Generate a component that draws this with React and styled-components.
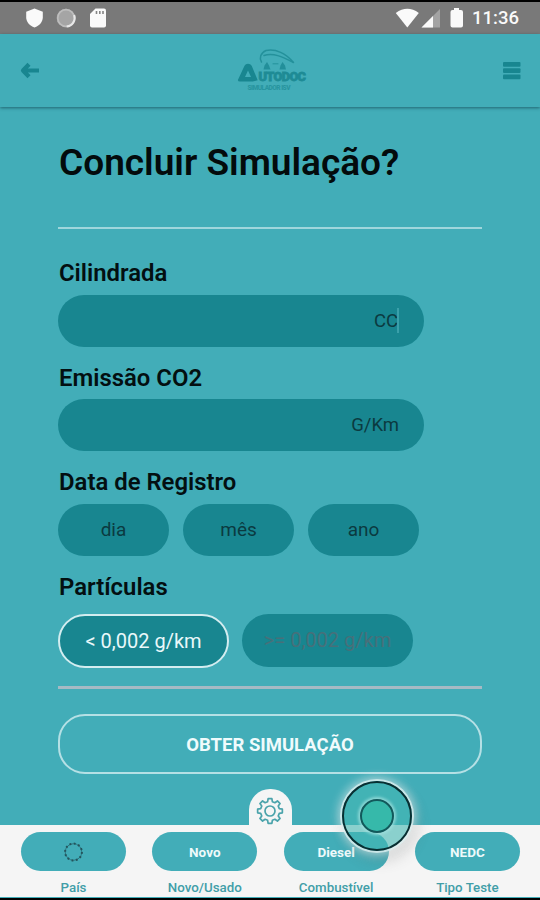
import React from 'react'
import styled, { createGlobalStyle } from 'styled-components'

const teal = '#42adb8'
const tealDark = '#188690'

const tabs = [
  { label: 'País', loading: true },
  { label: 'Novo/Usado', value: 'Novo' },
  { label: 'Combustível', value: 'Diesel' },
  { label: 'Tipo Teste', value: 'NEDC' },
]

const StatusBar = () => (
  <Status>
    <svg width="110" height="32" viewBox="0 2 110 32">
      <path d="M34.5 8.5l8.3 3.2v5.6c0 4.700-3.300 8.300-8.300 10.200-5-1.900-8.300-5.500-8.300-10.200v-5.600z" fill="#fafafa" />
      <circle cx="66" cy="18" r="9.300" fill="#a5a5a5" />
      <circle cx="66" cy="18" r="8.300" fill="none" stroke="#bdbdbd" strokeWidth="1.700" />
      <path d="M74.200 15a8.600 8.600 0 0 1-7.500 11.500" fill="none" stroke="#e8e8e8" strokeWidth="2" />
      <path d="M95.500 8.500h8.500q2 0 2 2v15q0 2-2 2H92q-2 0-2-2V14z" fill="#fafafa" />
      <path d="M96.500 11v3M99.800 11v3M103 11v3" stroke="#858585" strokeWidth="1.600" />
    </svg>
    <StatusRight>
      <svg width="72" height="32" viewBox="394 2 72 32">
        <path d="M395.800 13q11.500-8.400 23 0l-11.500 14.500z" fill="#fafafa" />
        <path d="M421.500 27.500L440 9v18.500z" fill="#a3a3a3" />
        <path d="M421.500 27.500L433 16v11.500z" fill="#fafafa" />
        <path d="M454 8h5v2h2q2 0 2 2v13.500q0 2-2 2h-8.500q-2 0-2-2V12q0-2 2-2h1.500z" fill="#fafafa" />
      </svg>
      <Clock>11:36</Clock>
    </StatusRight>
  </Status>
)

const Logo = () => (
  <svg width="74" height="48" viewBox="236 47 74 48" fill={tealDark}>
    <g fill="none" stroke={tealDark} strokeLinecap="round" opacity="0.7">
      <path d="M262.500 62c-2.500-4-1-9 4.500-11.500 10-2 20 3 27 11.500" strokeWidth="1.500" />
      <path d="M265 55.500c9-3 18 1 29.500 7" strokeWidth="1.500" />
      <path d="M274 63.800h5" strokeWidth="1" />
    </g>
    <g opacity="0.75">
      <path d="M264.500 69.500l1-4 2.500-3.500 2 3.500 1.500 4zM280.500 69.500l1-4 2-3.500 2.500 3.500 1 4z" />
    </g>
    <path fillRule="evenodd" d="M239 79.800l6.500-14q1-2 3.500-2t3.700 2l6 14.500-5 1.200h-12.700q-2.500 0-2-1.700zM246 77h6l-3-6.500z" />
    <LogoText x="259.500" y="81" textLength="47.500" fontSize="12.800">UTODOC</LogoText>
    <LogoText x="248.500" y="89.800" textLength="43" fontSize="6.600" $soft>SIMULADOR ISV</LogoText>
  </svg>
)

const Gear = () => {
  // eight teeth round the centre, alternating outer and inner radius
  const points = []
  for (let i = 0; i < 8; i++) {
    const a = (i * 45 * Math.PI) / 180
    const steps = [[-0.25, 9.600], [-0.15, 12.500], [0.15, 12.500], [0.25, 9.600]]
    steps.forEach(([d, r]) => {
      points.push(`${(Math.sin(a + d) * r).toFixed(2)},${(-Math.cos(a + d) * r).toFixed(2)}`)
    })
  }
  return (
    <svg width="30" height="30" viewBox="-15 -15 30 30" fill="none" stroke="#4aa3ab" strokeWidth="1.700" strokeLinejoin="round">
      <polygon points={points.join(' ')} />
      <circle r="5" />
    </svg>
  )
}

const Spinner = () => (
  <svg width="22" height="22" viewBox="-10.500 -11 22 22">
    <circle r="8.300" fill="none" stroke="#2c7780" strokeWidth="1" />
    <circle r="8.400" fill="none" stroke="#24545c" strokeWidth="2" strokeDasharray="1.900 2.500" />
  </svg>
)

const App = () => {
  return (
    <Wrapper>
      <GlobalStyle />
      <StatusBar />
      <Header>
        <svg width="20" height="18" viewBox="0 0 20 18" fill="none" stroke={tealDark} strokeWidth="4.200" strokeLinejoin="round">
          <path d="M9 2.200L3 8.500l6 6.300M3.500 8.500H19" />
        </svg>
        <Logo />
        <svg width="18" height="18" viewBox="0 0 18 18" fill={tealDark}>
          <rect y="0" width="17.500" height="4.800" rx="1" />
          <rect y="6.300" width="17.500" height="4.800" rx="1" />
          <rect y="12.500" width="17.500" height="4.800" rx="1" />
        </svg>
      </Header>
      <Content>
        <Title>Concluir Simulação?</Title>
        <Line />
        <Form>
          <Label>Cilindrada</Label>
          <Field>
            CC
            <Caret />
          </Field>
          <Label>Emissão CO2</Label>
          <Field>G/Km</Field>
          <Label>Data de Registro</Label>
          <Row>
            <DateField>dia</DateField>
            <DateField>mês</DateField>
            <DateField>ano</DateField>
          </Row>
          <Label>Partículas</Label>
          <OptionRow>
            <Option $active>&lt; 0,002 g/km</Option>
            <Option>&gt;= 0,002 g/km</Option>
          </OptionRow>
        </Form>
        <Line $thick />
        <Submit>OBTER SIMULAÇÃO</Submit>
      </Content>
      <BottomBar>
        <GearTab>
          <Gear />
        </GearTab>
        {tabs.map(({ label, value, loading }) => (
          <Tab key={label}>
            <TabPill>{loading ? <Spinner /> : value}</TabPill>
            <TabLabel>{label}</TabLabel>
          </Tab>
        ))}
        <TouchPoint />
      </BottomBar>
    </Wrapper>
  )
}

const GlobalStyle = createGlobalStyle`
  * {
    box-sizing: border-box;
  }
  body {
    margin: 0;
    background: #000;
    font-family: Roboto, 'Liberation Sans', sans-serif;
  }
  svg {
    display: block;
    flex-shrink: 0;
  }
`

const Wrapper = styled.main`
  width: 540px;
  height: 900px;
  display: flex;
  flex-direction: column;
  overflow: hidden;
  background: ${teal};
  border-top: 2px solid #000;
  border-bottom: 2px solid #000;
`

const Status = styled.div`
  height: 32px;
  flex-shrink: 0;
  display: flex;
  justify-content: space-between;
  background: #797979;
`

const StatusRight = styled.div`
  display: flex;
  align-items: center;
  padding-right: 20px;
`

const Clock = styled.span`
  width: 48px;
  margin-left: 6px;
  color: #fafafa;
  font-size: 18.500px;
  font-weight: 500;
  white-space: nowrap;
`

const Header = styled.header`
  height: 73px;
  flex-shrink: 0;
  display: flex;
  align-items: center;
  justify-content: space-between;
  padding: 0 19px 0 20px;
  box-shadow: 0 1px 3px rgba(20, 70, 80, 0.7);
`

const LogoText = styled.text`
  font-family: Roboto, sans-serif;
  font-weight: 900;
  stroke: ${tealDark};
  stroke-width: ${(props) => (props.$soft ? 0 : '0.8px')};
  opacity: ${(props) => (props.$soft ? 0.6 : 0.85)};
`

const Content = styled.section`
  flex: 1;
  padding: 34px 58px 0;
`

const Title = styled.h1`
  height: 44px;
  margin: 0 0 42px 1px;
  color: #030b0c;
  font-size: 37px;
  line-height: 44px;
  font-weight: 600;
  white-space: nowrap;
`

const Line = styled.div`
  height: ${(props) => (props.$thick ? '3px' : '2px')};
  background: ${(props) => (props.$thick ? '#a5bac4' : '#9fd6dc')};
`

const Form = styled.div`
  padding-top: 30px;
  height: 457px;
`

const Label = styled.h2`
  height: 28px;
  margin: 0 0 7.500px 1px;
  color: #030f11;
  font-size: 23.900px;
  line-height: 29px;
  font-weight: 600;
`

const Field = styled.div`
  width: 366px;
  height: 52px;
  margin-bottom: 17.200px;
  padding-right: 25px;
  display: flex;
  align-items: center;
  justify-content: flex-end;
  border-radius: 26px;
  background: ${tealDark};
  color: #0b3a40;
  font-size: 18.500px;
`

const Caret = styled.span`
  width: 2px;
  height: 25px;
  margin-left: -1px;
  background: #3aa0aa;
`

const Row = styled.div`
  display: flex;
  gap: 14px;
  margin-bottom: 17px;
`

const OptionRow = styled(Row)`
  margin-top: 13px;
  gap: 13px;
`

const DateField = styled.div`
  width: 111px;
  height: 52px;
  border-radius: 26px;
  display: flex;
  align-items: center;
  justify-content: center;
  background: ${tealDark};
  color: #0b3a40;
  font-size: 19px;
`

const Option = styled.div`
  width: 171px;
  height: ${(props) => (props.$active ? '54px' : '53px')};
  border-radius: 27px;
  display: flex;
  align-items: center;
  justify-content: center;
  border: ${(props) => (props.$active ? '2px solid #d3edf0' : 'none')};
  background: ${tealDark};
  color: ${(props) => (props.$active ? '#e9f8fa' : '#46707a')};
  font-size: 20px;
`

const Submit = styled.button`
  width: 100%;
  height: 60px;
  margin: 25px 0 0;
  padding: 2px 0 0;
  border: 2px solid #b5e0e5;
  border-radius: 27px;
  background: transparent;
  color: #f0fbfc;
  font-family: inherit;
  font-size: 18.500px;
  font-weight: 700;
`

const BottomBar = styled.footer`
  position: relative;
  height: 73px;
  flex-shrink: 0;
  display: flex;
  gap: 26.300px;
  padding: 7px 20px 0 21px;
  background: #f5f5f5;
  border-bottom: 1px solid ${teal};
`

const Tab = styled.div`
  width: 105px;
  display: flex;
  flex-direction: column;
  align-items: center;
`

const TabPill = styled.div`
  width: 105px;
  height: 39px;
  border-radius: 20px;
  display: flex;
  align-items: center;
  justify-content: center;
  background: ${teal};
  color: #eefafb;
  font-size: 13.500px;
  font-weight: 700;
`

const TabLabel = styled.span`
  margin-top: 9px;
  color: #419ea8;
  font-size: 13.300px;
  line-height: 16px;
  font-weight: 500;
  white-space: nowrap;
`

const GearTab = styled.div`
  position: absolute;
  left: 249px;
  top: -36px;
  width: 43px;
  height: 38px;
  padding: 7px 1px 0 0;
  display: flex;
  justify-content: center;
  background: #f5f5f5;
  border-radius: 21px 21px 0 0;
`

const TouchPoint = styled.div`
  position: absolute;
  left: 342px;
  top: -44px;
  width: 70px;
  height: 70px;
  border: 2px solid #082f32;
  border-radius: 50%;
  background: rgba(66, 184, 178, 0.6);
  box-shadow: 0 0 0 2px rgba(220, 240, 240, 0.75), 0 0 10px 4px rgba(235, 240, 240, 0.6), 4px 8px 14px 2px rgba(90, 90, 90, 0.2);

  &::after {
    content: '';
    position: absolute;
    inset: 16px;
    border: 2px solid #12595b;
    border-radius: 50%;
    background: #36b9aa;
    box-shadow: 0 0 3px 2px rgba(160, 225, 222, 0.8);
  }
`

export default App
